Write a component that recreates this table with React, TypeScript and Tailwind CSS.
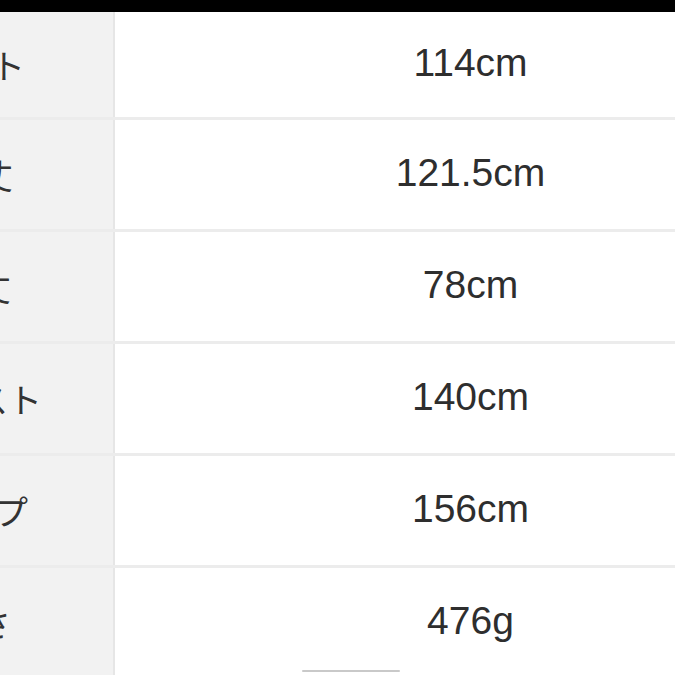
const rows = [
  { label: "ウエスト", value: "114cm", pr: "pr-[88px]" },
  { label: "総丈", value: "121.5cm", pr: "pr-[100px]" },
  { label: "着丈", value: "78cm", pr: "pr-[102px]" },
  { label: "バスト", value: "140cm", pr: "pr-[71px]" },
  { label: "ヒップ", value: "156cm", pr: "pr-[85px]" },
  { label: "重さ", value: "476g", pr: "pr-[102px]" },
];

export default function App() {
  return (
    <div className="w-[675px] h-[675px] overflow-hidden bg-white">
      <div className="h-[12px] bg-black" />
      <div className="flex flex-col">
        {rows.map((row, i) => (
          <div
            key={row.label}
            className={`relative flex ${i === 0 ? "h-[108px]" : "h-[112px]"} border-b-[3px] border-[#ececec]`}
          >
            <div
              className={`w-[115px] shrink-0 overflow-hidden flex items-center justify-end bg-[#f2f2f2] border-r-2 border-[#e6e6e6] ${row.pr}`}
            >
              <span className="whitespace-nowrap text-[34px] text-[#333333] font-['Noto_Sans_CJK_JP',sans-serif] leading-none">
                {row.label}
              </span>
            </div>
            <div className="flex-1 flex items-center justify-center pl-[151px] pb-[5px]">
              <span className="text-[39px] text-[#2e2e2e] font-['Liberation_Sans',Arial,sans-serif] leading-none">
                {row.value}
              </span>
            </div>
            {i === rows.length - 1 && (
              <div className="absolute left-[302px] top-[102px] w-[98px] h-[2px] bg-[#c9c9c9] rounded-full" />
            )}
          </div>
        ))}
      </div>
    </div>
  );
}
